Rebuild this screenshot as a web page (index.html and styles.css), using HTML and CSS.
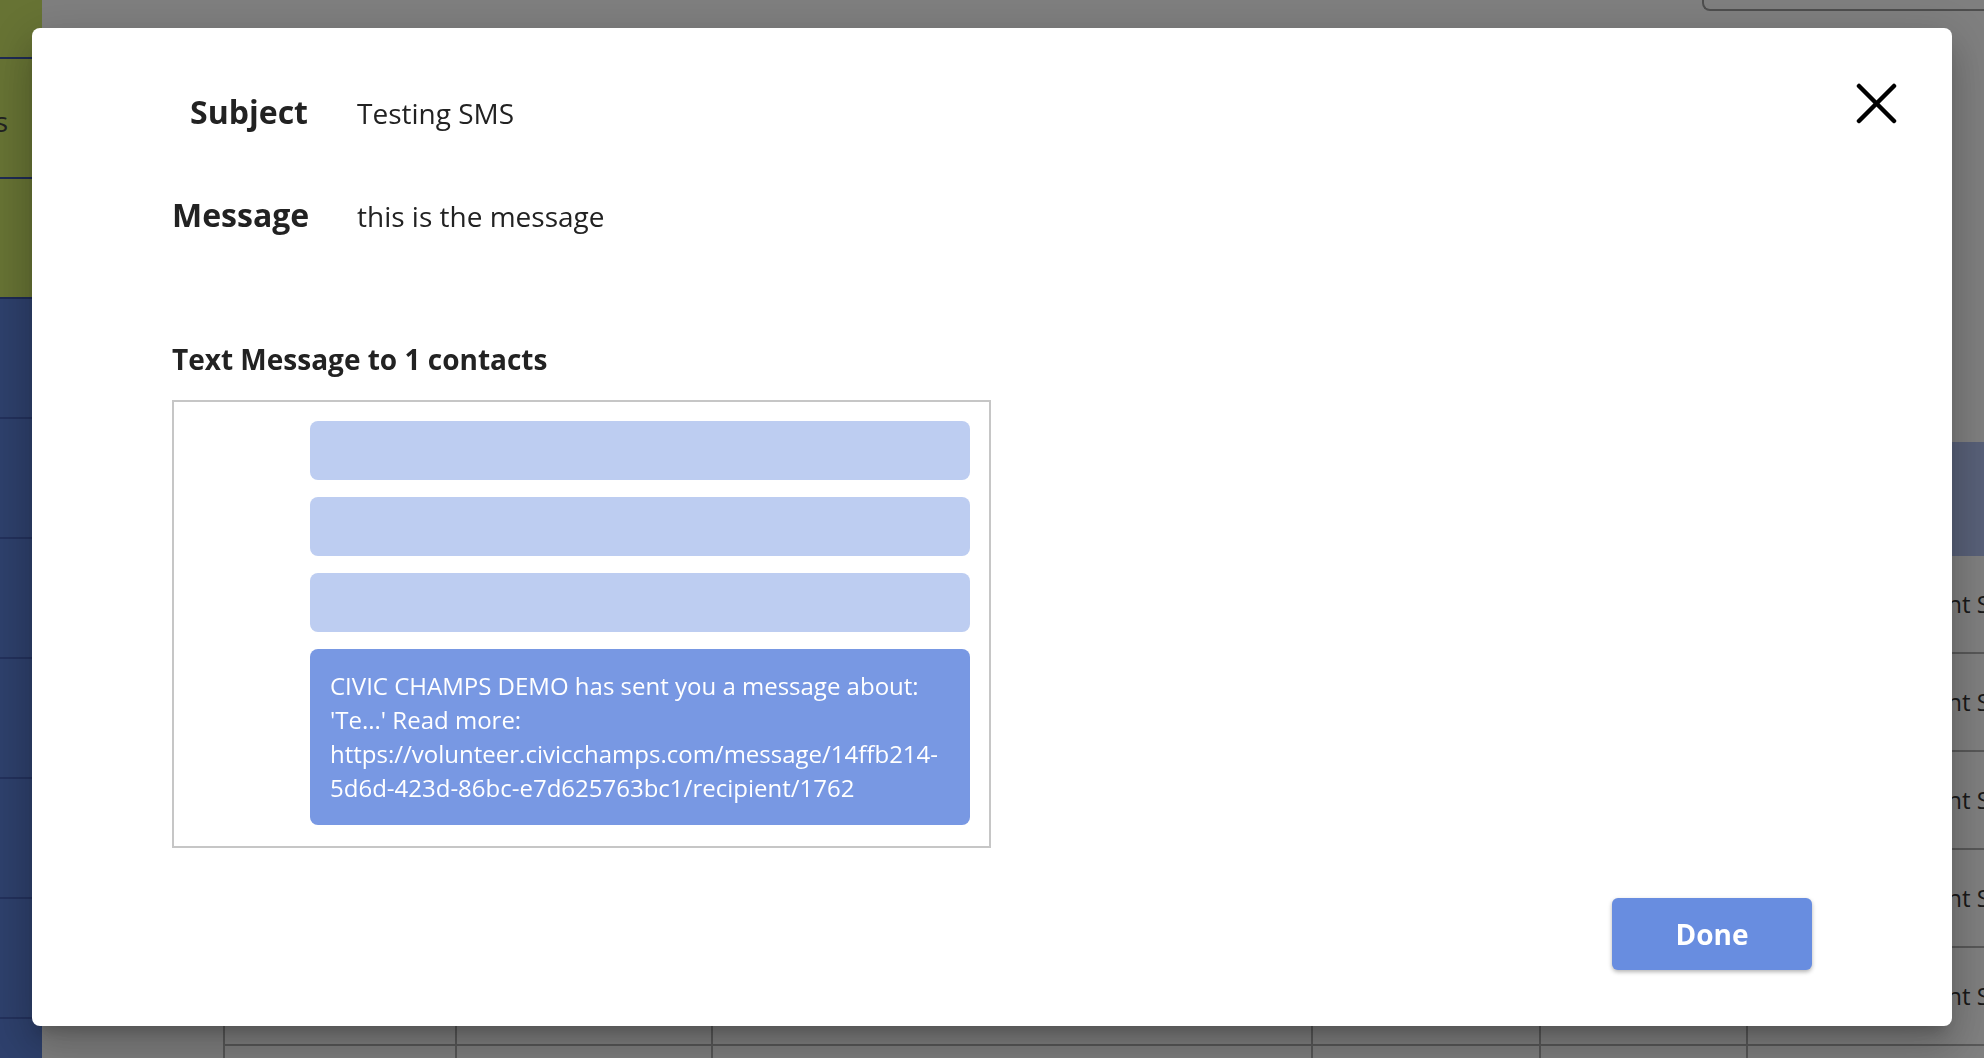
FILE: index.html
```html
<!DOCTYPE html>
<html lang="en">
<head>
<meta charset="UTF-8" />
<meta name="viewport" content="width=device-width, initial-scale=1" />
<title>Message details</title>
<link rel="stylesheet" href="styles.css">
</head>
<body>

<div class="app">
  <nav class="sidebar">
    <div class="side-item brand short"></div>
    <div class="side-item brand"><span class="side-label">Events</span></div>
    <div class="side-item brand"></div>
    <div class="side-item"></div>
    <div class="side-item"></div>
    <div class="side-item"></div>
    <div class="side-item"></div>
    <div class="side-item"></div>
    <div class="side-item"></div>
  </nav>

  <main class="main">
    <div class="topbar">
      <div class="search"></div>
    </div>

    <div class="table">
      <div class="cell head"></div>
      <div class="cell head"></div>
      <div class="cell head"></div>
      <div class="cell head"></div>
      <div class="cell head"></div>
      <div class="cell head"></div>

      <div class="cell"></div><div class="cell"></div><div class="cell"></div>
      <div class="cell"></div><div class="cell"></div><div class="cell">Announcement Sent</div>
      <div class="cell"></div><div class="cell"></div><div class="cell"></div>
      <div class="cell"></div><div class="cell"></div><div class="cell">Announcement Sent</div>
      <div class="cell"></div><div class="cell"></div><div class="cell"></div>
      <div class="cell"></div><div class="cell"></div><div class="cell">Announcement Sent</div>
      <div class="cell"></div><div class="cell"></div><div class="cell"></div>
      <div class="cell"></div><div class="cell"></div><div class="cell">Announcement Sent</div>
      <div class="cell"></div><div class="cell"></div><div class="cell"></div>
      <div class="cell"></div><div class="cell"></div><div class="cell">Announcement Sent</div>
      <div class="cell"></div><div class="cell"></div><div class="cell"></div>
      <div class="cell"></div><div class="cell"></div><div class="cell"></div>
    </div>
  </main>
</div>

<div class="overlay">
  <div class="modal">
    <button class="close" aria-label="Close">
      <svg width="41" height="41" viewBox="0 0 41 41">
        <line x1="3" y1="3" x2="38" y2="38" />
        <line x1="38" y1="3" x2="3" y2="38" />
      </svg>
    </button>

    <div class="fields">
      <div class="label">Subject</div>
      <div class="value">Testing SMS</div>
      <div class="label">Message</div>
      <div class="value">this is the message</div>
    </div>

    <h2 class="recipients">Text Message to 1 contacts</h2>

    <div class="preview">
      <div class="bubble"></div>
      <div class="bubble"></div>
      <div class="bubble"></div>
      <div class="bubble sent">CIVIC CHAMPS DEMO has sent you a message about: 'Te...' Read more: https://volunteer.civicchamps.com/message/14ffb214-<wbr>5d6d-423d-86bc-e7d625763bc1/recipient/1762</div>
    </div>

    <div class="actions">
      <button class="done">Done</button>
    </div>
  </div>
</div>

</body>
</html>
```

FILE: styles.css
```css
body {
  margin: 0;
  font-family: "Open Sans", "Liberation Sans", sans-serif;
  color: #222;
  background: #fff;
  overflow: hidden;
}

/* page behind the dialog */
.app {
  display: flex;
  height: 100vh;
}
.sidebar {
  width: 42px;
  flex-shrink: 0;
  background: #5c80d8;
  display: flex;
  flex-direction: column;
  overflow: hidden;
}
.side-item {
  height: 120px;
  flex-shrink: 0;
  box-sizing: border-box;
  border-bottom: 2px solid #4662b8;
  display: flex;
  align-items: center;
  justify-content: flex-end;
}
.side-item.brand {
  background: #cee668;
  border-bottom-color: #3c54a8;
}
.side-item.short {
  height: 59px;
}
.side-label {
  white-space: nowrap;
  font-size: 28px;
  color: #444;
  padding-right: 34px;
  margin-top: 6px;
}
.main {
  flex: 1;
  min-width: 0;
}
.topbar {
  display: flex;
  justify-content: flex-end;
}
.search {
  width: 280px;
  height: 9px;
  border: 2px solid #9c9c9c;
  border-top: none;
  border-right: none;
  border-radius: 0 0 0 8px;
}
.table {
  margin: 431px 0 0 181px;
  display: grid;
  grid-template-columns: 232px 256px 600px 228px 207px 1fr;
  grid-template-rows: 114px;
  grid-auto-rows: 98px;
}
.cell {
  box-sizing: border-box;
  border-left: 2px solid #b0b0b0;
  border-bottom: 2px solid #b0b0b0;
  font-size: 24px;
  line-height: 96px;
  padding-left: 50px;
  white-space: nowrap;
  color: #333;
}
.cell.head {
  background: #b0c0f0;
  border: none;
}

/* dialog */
.overlay {
  position: fixed;
  inset: 0;
  background: rgba(0, 0, 0, 0.5);
  display: flex;
  justify-content: center;
  align-items: flex-start;
  padding-top: 28px;
}
.modal {
  position: relative;
  width: 1920px;
  box-sizing: border-box;
  padding: 63px 140px 56px;
  background: #fff;
  border-radius: 8px;
  box-shadow: 0 11px 15px -7px rgba(0,0,0,0.2), 0 24px 38px 3px rgba(0,0,0,0.14), 0 9px 46px 8px rgba(0,0,0,0.12);
}
.close {
  position: absolute;
  top: 55px;
  right: 55px;
  padding: 0;
  border: none;
  background: none;
  cursor: pointer;
  line-height: 0;
}
.close line {
  stroke: #000;
  stroke-width: 4.5;
  stroke-linecap: round;
}
.fields {
  display: grid;
  grid-template-columns: 136px 1fr;
  column-gap: 49px;
  row-gap: 60px;
  align-items: baseline;
}
.label {
  font-size: 32px;
  line-height: 42px;
  font-weight: 700;
  text-align: right;
  white-space: nowrap;
}
.value {
  font-size: 28px;
  line-height: 42px;
}
.recipients {
  margin: 104px 0 23px;
  font-size: 28px;
  line-height: 36px;
  font-weight: 700;
}
.preview {
  width: 819px;
  box-sizing: border-box;
  border: 2px solid #c6c6c6;
  padding: 19px 19px 21px 136px;
  display: flex;
  flex-direction: column;
  gap: 17px;
}
.bubble {
  height: 59px;
  border-radius: 8px;
  background: #bdcdf1;
}
.bubble.sent {
  height: auto;
  padding: 20px;
  background: #7898e3;
  color: #fff;
  font-size: 24px;
  line-height: 34px;
}
.actions {
  margin-top: 50px;
  display: flex;
  justify-content: flex-end;
}
.done {
  width: 200px;
  height: 72px;
  border: none;
  border-radius: 6px;
  background: #688de0;
  color: #fff;
  font-family: "Open Sans", "Liberation Sans", sans-serif;
  font-size: 28px;
  font-weight: 700;
  cursor: pointer;
  box-shadow: 0 2px 4px rgba(0,0,0,0.3);
}
```
